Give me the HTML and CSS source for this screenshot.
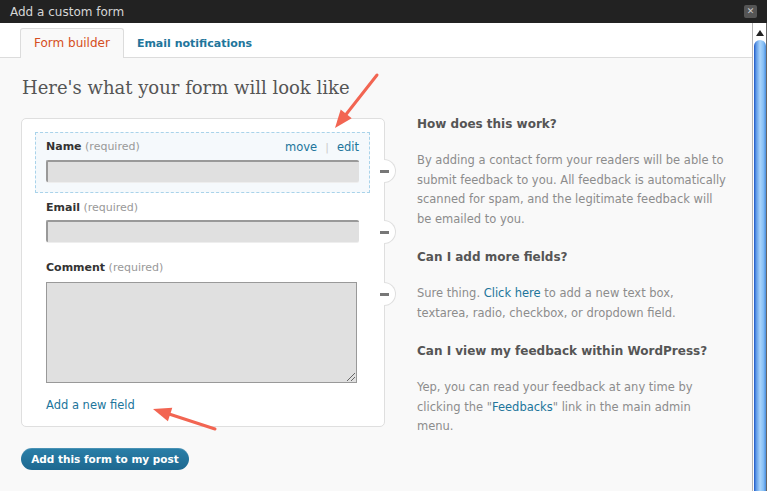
FILE: index.html
```html
<!DOCTYPE html>
<html>
<head>
<meta charset="utf-8">
<link rel="stylesheet" href="styles.css">
</head>
<body>
<div class="titlebar">
  <span class="title">Add a custom form</span>
  <span class="close">&#x2715;</span>
</div>
<div class="frame">
  <div class="main">
    <div class="tabs">
      <span class="tab active">Form builder</span>
      <span class="tab">Email notifications</span>
    </div>
    <div class="content">
      <div class="left">
        <h2 class="page-title">Here's what your form will look like</h2>
        <div class="formbox">
          <div class="field selected">
            <div class="label-row">
              <span class="label"><b>Name</b> <span class="req">(required)</span></span>
              <span class="actions"><a>move</a><span class="sep">|</span><a>edit</a></span>
            </div>
            <div class="input"></div>
            <span class="remove r1"></span>
          </div>
          <div class="field">
            <div class="label-row">
              <span class="label"><b>Email</b> <span class="req">(required)</span></span>
            </div>
            <div class="input"></div>
            <span class="remove r2"></span>
          </div>
          <div class="field">
            <div class="label-row">
              <span class="label"><b>Comment</b> <span class="req">(required)</span></span>
            </div>
            <div class="textarea"><span class="grip"></span></div>
            <span class="remove r3"></span>
          </div>
          <a class="add-field">Add a new field</a>
        </div>
        <div class="btn-row"><span class="button">Add this form to my post</span></div>
      </div>
      <div class="right">
        <h3>How does this work?</h3>
        <p>By adding a contact form your readers will be able to<br>submit feedback to you. All feedback is automatically<br>scanned for spam, and the legitimate feedback will<br>be emailed to you.</p>
        <h3>Can I add more fields?</h3>
        <p>Sure thing. <a>Click here</a> to add a new text box,<br>textarea, radio, checkbox, or dropdown field.</p>
        <h3>Can I view my feedback within WordPress?</h3>
        <p>Yep, you can read your feedback at any time by<br>clicking the "<a>Feedbacks</a>" link in the main admin<br>menu.</p>
      </div>
    </div>
  </div>
  <div class="scroll">
    <div class="arrow-up"></div>
    <div class="thumb"></div>
  </div>
</div>
<svg class="annot" width="767" height="491" viewBox="0 0 767 491">
  <line x1="377" y1="75" x2="344" y2="117" stroke="#f26552" stroke-width="3" stroke-linecap="round"/>
  <polygon points="335,128 351.7,118.2 340.7,109.6" fill="#f26552"/>
  <line x1="215" y1="429" x2="166" y2="413" stroke="#f26552" stroke-width="3" stroke-linecap="round"/>
  <polygon points="153,409 172.3,407.8 167.9,421.2" fill="#f26552"/>
</svg>
</body>
</html>
```
FILE: styles.css
```css
* { box-sizing: border-box; }
html, body { margin: 0; padding: 0; }
body {
  width: 767px;
  height: 491px;
  overflow: hidden;
  background: #f9f9f9;
  font-family: "DejaVu Sans", Verdana, sans-serif;
  font-size: 11px;
  position: relative;
}
a { color: #21759b; text-decoration: none; }

.titlebar {
  height: 23px;
  background: #222;
  display: flex;
  align-items: center;
  justify-content: space-between;
  padding: 0 10px 0 10px;
}
.title { color: #d6d6d6; font-size: 12px; }
.close {
  width: 13px; height: 13px;
  background: #555;
  border-radius: 2px;
  color: #ccc;
  font-size: 9px;
  line-height: 13px;
  text-align: center;
}

.frame { display: flex; height: 468px; }
.main { flex: 1; }

.tabs {
  height: 35px;
  background: #fff;
  border-bottom: 1px solid #dcdcdc;
  display: flex;
  align-items: flex-end;
  padding-left: 20px;
}
.tab {
  height: 30px;
  line-height: 29px;
  padding: 0 13px 0 12px;
  margin-bottom: -1px;
  font-size: 11px;
  font-weight: bold;
  color: #21759b;
  border: 1px solid transparent;
  border-bottom: none;
}
.tab.active {
  font-size: 12px;
  font-weight: normal;
  color: #d54e21;
  background: #f9f9f9;
  border-color: #dcdcdc;
  border-radius: 3px 3px 0 0;
  padding: 0 13px 0 13px;
}

.content { display: flex; padding-left: 21px; }
.left { width: 364px; }
.page-title {
  margin: 17px 0 17px 1px;
  font-family: "DejaVu Serif", Georgia, serif;
  font-weight: normal;
  font-size: 18px;
  line-height: 26px;
  color: #555;
}

.formbox {
  position: relative;
  background: #fff;
  border: 1px solid #dfdfdf;
  border-radius: 5px;
  padding: 13px 14px 13px 13px;
}
.field {
  position: relative;
  border: 1px dashed transparent;
  padding: 6px 10px 10px 10px;
}
.field.selected {
  border-color: #a9d3ea;
  background: #f5f9fc;
}
.label-row {
  display: flex;
  justify-content: space-between;
  line-height: 16px;
  margin-bottom: 4px;
  font-size: 11px;
}
.label b { color: #333; }
.req { color: #999; }
.actions a { font-size: 11.5px; }
.sep { color: #ccc; margin: 0 8px; }
.input {
  height: 22px;
  background: #e0e0e0;
  border-top: 2px solid #999;
  border-left: 2px solid #999;
  border-radius: 2px;
  box-shadow: 0 1px 0 #eee;
}
.textarea {
  position: relative;
  height: 101px;
  margin: 6px 2px 0 0;
  background: #e0e0e0;
  border: 1px solid #999;
}
.grip {
  position: absolute;
  right: 1px; bottom: 1px;
  width: 8px; height: 8px;
  background: linear-gradient(135deg, transparent 45%, #666 45%, #666 52%, transparent 52%, transparent 70%, #666 70%, #666 77%, transparent 77%);
}
.remove {
  position: absolute;
  right: -27px;
  width: 12px;
  height: 24px;
  background: #fff;
  border: 1px solid #dfdfdf;
  border-left: none;
  border-radius: 0 12px 12px 0;
}
.remove::before {
  content: "";
  position: absolute;
  left: -4px;
  top: 10px;
  width: 9px;
  height: 3px;
  background: #777;
}
.r1 { top: 26px; }
.r2 { top: 26px; }
.r3 { top: 28px; }

.add-field {
  display: block;
  margin: 3px 0 0 11px;
  line-height: 16px;
  font-size: 11.5px;
}

.btn-row { margin-top: 21px; }
.button {
  display: inline-block;
  width: 168px;
  height: 22px;
  line-height: 22px;
  border-radius: 11px;
  background: linear-gradient(#2a7fa8, #1d6890);
  box-shadow: inset 0 1px 0 rgba(255,255,255,0.15);
  color: #fff;
  font-weight: bold;
  font-size: 10.5px;
  text-align: center;
}

.right {
  margin-left: 32px;
  padding-top: 57px;
  width: 325px;
  color: #8c8c8c;
  line-height: 19.5px;
}
.right h3 {
  margin: 0 0 16.5px 0;
  font-size: 12px;
  line-height: 19.5px;
  color: #555;
}
.right p { margin: 0 0 19px 0; font-size: 11.5px; }

.scroll {
  width: 15px;
  background: #fff;
  border-left: 1px solid #b5b5b5;
  border-right: 1px solid #666;
  display: flex;
  flex-direction: column;
}
.arrow-up {
  height: 17px;
  position: relative;
}
.arrow-up::before {
  content: "";
  position: absolute;
  left: 3px; top: 7px;
  border-left: 4px solid transparent;
  border-right: 4px solid transparent;
  border-bottom: 6px solid #222;
}
.thumb {
  flex: 1;
  margin: 0 0 0 1px;
  border-radius: 7px 7px 0 0;
  background: linear-gradient(to right, #1d55c4 0, #5f9ae6 18%, #a9d4fb 50%, #86bff5 78%, #4a8ee0 100%);
}

.annot { position: absolute; left: 0; top: 0; pointer-events: none; }
```
